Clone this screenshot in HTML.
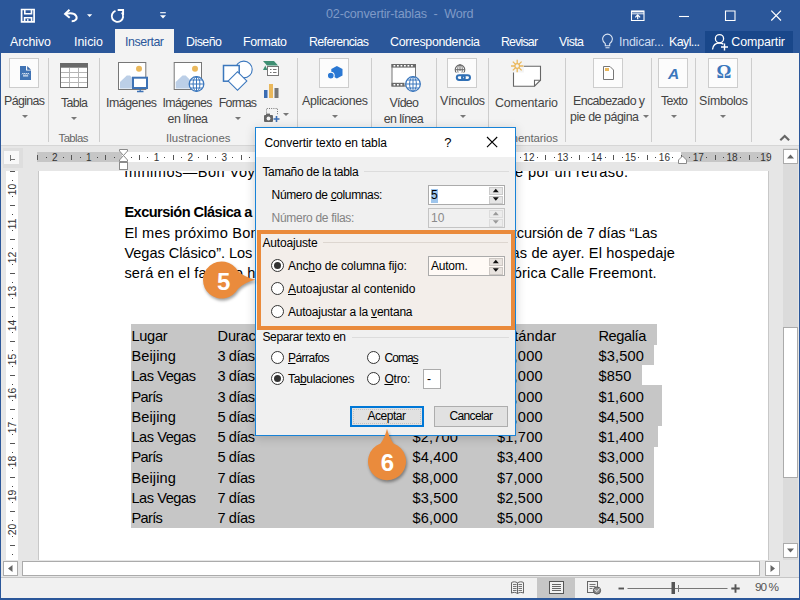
<!DOCTYPE html>
<html lang="es">
<head>
<meta charset="utf-8">
<title>02-convertir-tablas - Word</title>
<style>
*{box-sizing:border-box;margin:0;padding:0}
html,body{width:800px;height:600px;overflow:hidden;background:#e6e6e6;font-family:"Liberation Sans",sans-serif}
.a{position:absolute}
.t{position:absolute;white-space:pre;line-height:1;color:#444}
svg{position:absolute;overflow:visible}
u{text-decoration:underline;text-underline-offset:1px}
#titlebar{left:0;top:0;width:800px;height:53px;background:#2b579a}
#ribbon{left:1px;top:53px;width:798px;height:93px;background:#f3f3f3;border-bottom:1px solid #d6d6d6}
.sep{position:absolute;top:58px;width:1px;height:84px;background:#cdcdcd}
.ibox{position:absolute;top:58px;width:30px;height:30px;background:#fcfcfc;border:1px solid #cdcdcd}
.dd{position:absolute;width:0;height:0;border-left:3px solid transparent;border-right:3px solid transparent;border-top:3px solid #777}
#frameL{left:0;top:0;width:1px;height:600px;background:#2b579a}
#frameR{left:799px;top:0;width:1px;height:600px;background:#2b579a}
#frameB{left:0;top:598px;width:800px;height:2px;background:#2b579a}
#page{left:38px;top:171px;width:731px;height:389px;background:#fff;border-left:1px solid #c8c8c8;border-right:1px solid #c8c8c8;overflow:hidden}
.doc{color:#000}
.sel{position:absolute;background:#c6c6c6}
.sbox{position:absolute;background:#fff;border:1px solid #ababab}
#status{left:1px;top:577px;width:798px;height:21px;background:#f1f1f1;border-top:1px solid #c6c6c6}
#dlg{left:255px;top:127px;width:261px;height:309px;background:#f0f0f0;border:1px solid #1883d7;box-shadow:0 2px 10px rgba(0,0,0,.18)}
#dlgtitle{left:0;top:0;width:259px;height:29px;background:#fff}
.dt{color:#000}
.radio{position:absolute;width:13px;height:13px;border:1px solid #333;border-radius:50%;background:#fff}
.radio.on::after{content:"";position:absolute;left:2px;top:2px;width:7px;height:7px;border-radius:50%;background:#333}
.gline{position:absolute;height:1px;background:#dcdcdc}
.btn{position:absolute;background:#e1e1e1;border:1px solid #adadad}
</style>
</head>
<body>
<!-- ===== window frame / title bar ===== -->
<div id="titlebar" class="a"></div>
<div class="a" style="left:115px;top:29px;width:59px;height:25px;background:#f3f3f3"></div>
<div class="a" style="left:705px;top:31px;width:88px;height:22px;background:#19478a"></div>
<!-- quick access toolbar icons -->
<svg class="a" style="left:0;top:0" width="800" height="53" viewBox="0 0 800 53" fill="none" stroke="#fff" stroke-width="1.4">
 <!-- save -->
 <path d="M21.600 9.500h12.500v12.300H21.600z" stroke-width="1.700"/><path d="M24.800 9.500v4.300h6.700v-4.300" stroke-width="1.600"/><path d="M24.600 21.800v-4h7v4" stroke-width="1.600"/><path d="M27.800 19v2.800" stroke-width="1.300"/>
 <!-- undo -->
 <path d="M65.500 14c3.500-.9 8.500-1.300 10.500 1.700 1.800 3-.6 5.600-4.300 5.600" stroke-width="2"/><path d="M69.500 9.800l-4.400 4.200 4.600 3.800" stroke-width="2"/>
 <path d="M87 14.200h5.200l-2.600 2.800z" fill="#fff" stroke="none"/>
 <!-- redo / repeat -->
 <path d="M115.500 10.800a5.700 5.700 0 1 0 6.300 1.700" stroke-width="1.900"/><path d="M117.700 10h5.400v5" stroke-width="1.900"/>
 <!-- customize QAT -->
 <path d="M160.200 12.700h5.600" stroke-width="1.100"/><path d="M160 15.300h6l-3 3.200z" fill="#fff" stroke="none"/>
 <!-- ribbon display options -->
 <path d="M631.500 11h12.500v9.500h-12.500z" stroke-width="1.100"/><path d="M631.500 11.600h12.500" stroke-width="1.600"/><path d="M631.500 13.800h12.500" stroke-width=".9"/><path d="M637.700 19.300v-4.300M635.300 17.300l2.400-2.500 2.400 2.500" stroke-width="1.200"/>
 <!-- min / max / close -->
 <path d="M679 16.500h10" stroke-width="1.100"/>
 <path d="M725.500 11h9.500v9.500h-9.500z" stroke-width="1.100"/>
 <path d="M771.300 10.700l9.700 9.800M781 10.700l-9.700 9.800" stroke-width="1.200"/>
 <!-- lightbulb -->
 <path d="M605.300 43.700c-1.800-1.500-2.700-2.900-2.700-4.700a4.900 4.900 0 0 1 9.800 0c0 1.800-.9 3.200-2.700 4.700v2.100h-4.400z M605.500 47.800h4" stroke="#dbe5f3" stroke-width="1.100"/>
 <!-- share person -->
 <circle cx="719.500" cy="38.700" r="4.100" stroke-width="1.300"/><path d="M712.500 49.500c.5-4 3-6.500 7-6.500 1.500 0 2.800.4 3.800 1.100" stroke-width="1.300"/><path d="M724.500 43.500v7M721 47h7" stroke-width="1.400"/>
</svg>
<span class="t" style="left:326.00px;top:8.00px;font-size:12.6px;letter-spacing:-0.179px;color:#7f9ac7">02-convertir-tablas  -  Word</span>
<!-- tabs -->
<span class="t" style="left:10.00px;top:36.00px;font-size:12.4px;letter-spacing:-0.055px;color:#fff">Archivo</span>
<span class="t" style="left:74.00px;top:36.00px;font-size:12.4px;letter-spacing:0.013px;color:#fff">Inicio</span>
<span class="t" style="left:125.00px;top:36.00px;font-size:12.4px;letter-spacing:-0.431px;color:#2b579a">Insertar</span>
<span class="t" style="left:186.00px;top:36.00px;font-size:12.4px;letter-spacing:-0.516px;color:#fff">Diseño</span>
<span class="t" style="left:243.00px;top:36.00px;font-size:12.4px;letter-spacing:-0.357px;color:#fff">Formato</span>
<span class="t" style="left:309.00px;top:36.00px;font-size:12.4px;letter-spacing:-0.613px;color:#fff">Referencias</span>
<span class="t" style="left:390.00px;top:36.00px;font-size:12.4px;letter-spacing:-0.312px;color:#fff">Correspondencia</span>
<span class="t" style="left:501.00px;top:36.00px;font-size:12.4px;letter-spacing:-0.833px;color:#fff">Revisar</span>
<span class="t" style="left:559.00px;top:36.00px;font-size:12.4px;letter-spacing:-0.582px;color:#fff">Vista</span>
<span class="t" style="left:619.00px;top:36.00px;font-size:12.4px;letter-spacing:-0.205px;color:#cfdcf0">Indicar...</span>
<span class="t" style="left:669.00px;top:36.00px;font-size:12.4px;letter-spacing:-0.573px;color:#fff">Kayl...</span>
<span class="t" style="left:731.30px;top:36.00px;font-size:12.4px;letter-spacing:-0.086px;color:#fff">Compartir</span>

<!-- ===== ribbon ===== -->
<div id="ribbon" class="a"></div>
<!-- separators -->
<div class="sep" style="left:48px"></div><div class="sep" style="left:99px"></div><div class="sep" style="left:297px"></div>
<div class="sep" style="left:371px"></div><div class="sep" style="left:436px"></div><div class="sep" style="left:488px"></div>
<div class="sep" style="left:565px"></div><div class="sep" style="left:651px"></div><div class="sep" style="left:695px"></div><div class="sep" style="left:751px"></div>
<!-- collapsed group icon boxes -->
<div class="ibox" style="left:9px"></div><div class="ibox" style="left:319px"></div><div class="ibox" style="left:447px"></div>
<div class="ibox" style="left:593px"></div><div class="ibox" style="left:658px"></div><div class="ibox" style="left:708px"></div>
<!-- ribbon icons -->
<svg class="a" style="left:0;top:53px" width="800" height="93" viewBox="0 53 800 93" fill="none">
 <!-- Paginas: blue page -->
 <path d="M20 66h6v4.600h5v9.400h-11z" fill="#4073b4"/><path d="M27.200 66l3.800 3.700h-3.800z" fill="#3a69a8"/><path d="M22 74.300l.9-1 .9 1 .9-1 .9 1 .9-1 .9 1 .9-1 .8 1" stroke="#fff" stroke-width=".9" fill="none"/><path d="M23 75.900h5.200" stroke="#fff" stroke-width="1"/>
 <!-- Tabla -->
 <rect x="60.500" y="63.500" width="27" height="24" fill="#fff" stroke="#6e6e6e" stroke-width="1"/><rect x="60" y="63" width="28" height="4.700" fill="#6a6a6a"/>
 <path d="M61 72.500h26M61 77.500h26M61 82.500h26M69.500 68v19M78.500 68v19" stroke="#b5b5b5" stroke-width="1"/>
 <!-- Imagenes -->
 <rect x="118.500" y="62.500" width="27.300" height="27" fill="#fff" stroke="#777"/><circle cx="139" cy="68.800" r="3" fill="#eab85c"/><path d="M120 88.500v-6.500l6.800-6.500h3.200l8 8v5z" fill="#bccfe7"/>
 <rect x="133" y="77.700" width="14" height="10.300" fill="#fff" stroke="#3d72b5" stroke-width="2"/><path d="M137 91.500h6.500M140.200 89v2.500" stroke="#3d72b5" stroke-width="1.300"/>
 <!-- Imagenes en linea -->
 <rect x="174.200" y="62.500" width="27.300" height="27" fill="#fff" stroke="#777"/><circle cx="195" cy="68.800" r="3" fill="#eab85c"/><path d="M175.700 88.500v-6.500l6.800-6.500h3.200l8 8v5z" fill="#bccfe7"/>
 <circle cx="196.500" cy="84" r="7.300" fill="#fff" stroke="#3b77bd" stroke-width="1.300"/><path d="M189.200 84h14.600M196.500 76.700v14.600M190.500 80h12M190.500 88h12" stroke="#3b77bd" stroke-width="1"/><ellipse cx="196.500" cy="84" rx="3.400" ry="7.300" stroke="#3b77bd" stroke-width="1"/>
 <!-- Formas -->
 <circle cx="243.800" cy="69.500" r="8.400" fill="#fff" stroke="#3b77bd" stroke-width="1.100"/><rect x="223.500" y="65.500" width="15.700" height="15.700" fill="#fff" stroke="#3b77bd" stroke-width="1.500"/><rect x="230.900" y="74.400" width="13.200" height="13.200" fill="#fff" stroke="#3b77bd" stroke-width="1.100" transform="rotate(45 237.500 81)"/>
 <!-- SmartArt -->
 <path d="M263 61h11l4 4.500h-11z" fill="#3f8f73"/><path d="M263 70h4.500l-2.200-4.500z" fill="#3f8f73"/><rect x="267.500" y="66.500" width="11" height="9" fill="#fff" stroke="#777"/><path d="M270 69.500h1.500M273 69.500h3.500M270 72.500h1.500M273 72.500h3.500" stroke="#777"/>
 <!-- Chart -->
 <rect x="264" y="90" width="3.500" height="8" fill="#3b6db3"/><rect x="269" y="84" width="4" height="14" fill="#eab85c"/><rect x="274.500" y="88" width="4" height="10" fill="#777"/>
 <!-- Screenshot -->
 <path d="M266.500 117v-8.500h11v6" stroke="#777" stroke-dasharray="1 1.200"/><rect x="264" y="115" width="9" height="7" rx="1" fill="#666"/><rect x="266" y="113.600" width="4" height="2" fill="#666"/><circle cx="268.500" cy="118.500" r="1.900" fill="#f3f3f3"/><path d="M276.500 116v6M273.500 119h6" stroke="#3b6db3" stroke-width="1.600"/>
 <!-- Aplicaciones -->
 <path d="M331.300 69l5.600-2.900 5.600 2.900v6.600l-5.600 3-5.600-3z" fill="#2a78d3"/><circle cx="330.800" cy="75.600" r="3.400" fill="#2a78d3" stroke="#fdfdfd" stroke-width="1.100"/>
 <!-- Video en linea -->
 <rect x="392" y="64.500" width="23.500" height="21.500" fill="#fff" stroke="#777"/><rect x="391.500" y="64" width="24.500" height="3.600" fill="#6a6a6a"/><rect x="391.500" y="82.800" width="13" height="3.700" fill="#6a6a6a"/>
 <path d="M393.500 65.800h21M393.500 84.700h10" stroke="#fff" stroke-width="1.500" stroke-dasharray="1.800 1.700"/>
 <circle cx="413" cy="84" r="7.300" fill="#fff" stroke="#3b77bd" stroke-width="1.300"/><path d="M405.700 84h14.600M413 76.700v14.600M407 80h12M407 88h12" stroke="#3b77bd" stroke-width="1"/><ellipse cx="413" cy="84" rx="3.400" ry="7.300" stroke="#3b77bd" stroke-width="1"/>
 <!-- Vinculos -->
 <circle cx="460" cy="69.700" r="4.800" stroke="#666" stroke-width="1.100"/><path d="M455.200 69.700h9.600M460 64.900v6" stroke="#666" stroke-width="1"/><ellipse cx="460" cy="69.700" rx="2.300" ry="4.800" stroke="#666" stroke-width=".9"/>
 <rect x="454" y="72.600" width="18" height="9.500" fill="#fcfcfc" stroke="none"/>
 <rect x="456.800" y="75.200" width="8" height="4.800" rx="2.400" stroke="#2f6fb5" stroke-width="2"/><rect x="462" y="75.200" width="8" height="4.800" rx="2.400" stroke="#2f6fb5" stroke-width="2"/>
 <!-- Comentario -->
 <path d="M513.500 66.200h27v14l-6 6h-21z" fill="#fff" stroke="#666" stroke-width="1.100"/><path d="M534.500 86.200v-6h6" stroke="#666" stroke-width="1.100"/>
 <rect x="510.500" y="59.500" width="13.300" height="13" fill="#f3f3f3"/><path d="M517.200 59.800v12.400M511 66h12.400M512.800 61.600l8.800 8.800M521.600 61.600l-8.800 8.800" stroke="#eab85c" stroke-width="1.300"/><circle cx="517.200" cy="66" r="2.300" fill="#f3f3f3" stroke="#eab85c" stroke-width="1.200"/>
 <!-- Encabezado -->
 <path d="M603.500 66.500h6.500l3.500 3.500v9.500h-10z" fill="#fff" stroke="#777"/><rect x="605" y="68" width="4" height="3" fill="#eab85c"/>
 <!-- Simbolos etc handled as text -->
 <!-- collapse caret -->
 <path d="M780.300 140.300l4.400-4.400 4.400 4.400" stroke="#666" stroke-width="2.100"/>
</svg>
<span class="t" style="left:667.90px;top:66.00px;font-size:15.5px;color:#3b77bd;font-style:italic;font-weight:bold">A</span>
<span class="t" style="left:716.59px;top:63.00px;font-size:18.5px;color:#3b77bd;font-family:'Liberation Serif',serif;font-weight:bold">Ω</span>
<!-- ribbon labels -->
<span class="t" style="left:4.00px;top:95.00px;font-size:12.4px;letter-spacing:-0.630px">Páginas</span>
<span class="t" style="left:61.00px;top:97.00px;font-size:12.4px;letter-spacing:-0.656px">Tabla</span>
<span class="t" style="left:106.00px;top:97.00px;font-size:12.4px;letter-spacing:-0.489px">Imágenes</span>
<span class="t" style="left:162.50px;top:97.00px;font-size:12.4px;letter-spacing:-0.632px">Imágenes</span>
<span class="t" style="left:167.50px;top:113.00px;font-size:12.4px;letter-spacing:-0.513px">en línea</span>
<span class="t" style="left:218.70px;top:97.00px;font-size:12.4px;letter-spacing:-0.740px">Formas</span>
<span class="t" style="left:302.00px;top:95.00px;font-size:12.4px;letter-spacing:-0.325px">Aplicaciones</span>
<span class="t" style="left:389.50px;top:97.00px;font-size:12.4px;letter-spacing:-0.773px">Vídeo</span>
<span class="t" style="left:383.70px;top:113.00px;font-size:12.4px;letter-spacing:-0.585px">en línea</span>
<span class="t" style="left:440.00px;top:95.00px;font-size:12.4px;letter-spacing:-0.362px">Vínculos</span>
<span class="t" style="left:495.00px;top:97.00px;font-size:12.4px;letter-spacing:-0.116px">Comentario</span>
<span class="t" style="left:573.00px;top:95.00px;font-size:12.4px;letter-spacing:-0.594px">Encabezado y</span>
<span class="t" style="left:570.00px;top:111.00px;font-size:12.4px;letter-spacing:-0.452px">pie de página</span>
<span class="t" style="left:661.00px;top:95.00px;font-size:12.4px;letter-spacing:-0.656px">Texto</span>
<span class="t" style="left:699.00px;top:95.00px;font-size:12.4px;letter-spacing:-0.379px">Símbolos</span>
<!-- group labels -->
<span class="t" style="left:58.60px;top:133.00px;font-size:11.4px;letter-spacing:-0.627px;color:#666">Tablas</span>
<span class="t" style="left:166.00px;top:133.00px;font-size:11.4px;letter-spacing:0.046px;color:#666">Ilustraciones</span>
<span class="t" style="left:494.00px;top:133.00px;font-size:11.4px;letter-spacing:-0.058px;color:#666">Comentarios</span>
<!-- dropdown arrows -->
<div class="dd" style="left:22px;top:115px"></div><div class="dd" style="left:71px;top:117px"></div><div class="dd" style="left:235px;top:117px"></div>
<div class="dd" style="left:283px;top:113px"></div><div class="dd" style="left:332px;top:115px"></div><div class="dd" style="left:460px;top:115px"></div>
<div class="dd" style="left:643px;top:115px"></div><div class="dd" style="left:671px;top:115px"></div><div class="dd" style="left:720px;top:115px"></div>

<!-- ===== ruler + document ===== -->
<!-- tab selector -->
<div class="a" style="left:3px;top:148px;width:20px;height:20px;background:#dedede"></div>
<div class="a" style="left:4px;top:151px;width:15px;height:13px;background:#f8f8f8"></div>
<div class="a" style="left:9.500px;top:154.500px;width:1.300px;height:6px;background:#777"></div><div class="a" style="left:9.500px;top:159.200px;width:5.500px;height:1.300px;background:#777"></div>
<!-- horizontal ruler -->
<div class="a" style="left:37px;top:152px;width:732px;height:10px;background:#c6c6c6"></div>
<div class="a" style="left:122px;top:152px;width:559px;height:10px;background:#fff"></div>
<svg class="a" style="left:0;top:0" width="800" height="172" viewBox="0 0 800 172"><rect x="37" y="155" width="1" height="5" fill="#555"/><rect x="46" y="157" width="1" height="1" fill="#444"/><rect x="63" y="157" width="1" height="1" fill="#444"/><rect x="71" y="155" width="1" height="5" fill="#555"/><rect x="80" y="157" width="1" height="1" fill="#444"/><rect x="97" y="157" width="1" height="1" fill="#444"/><rect x="105" y="155" width="1" height="5" fill="#555"/><rect x="114" y="157" width="1" height="1" fill="#444"/><rect x="131" y="157" width="1" height="1" fill="#444"/><rect x="139" y="155" width="1" height="5" fill="#555"/><rect x="147" y="157" width="1" height="1" fill="#444"/><rect x="164" y="157" width="1" height="1" fill="#444"/><rect x="173" y="155" width="1" height="5" fill="#555"/><rect x="181" y="157" width="1" height="1" fill="#444"/><rect x="198" y="157" width="1" height="1" fill="#444"/><rect x="207" y="155" width="1" height="5" fill="#555"/><rect x="215" y="157" width="1" height="1" fill="#444"/><rect x="232" y="157" width="1" height="1" fill="#444"/><rect x="241" y="155" width="1" height="5" fill="#555"/><rect x="249" y="157" width="1" height="1" fill="#444"/><rect x="266" y="157" width="1" height="1" fill="#444"/><rect x="274" y="155" width="1" height="5" fill="#555"/><rect x="283" y="157" width="1" height="1" fill="#444"/><rect x="300" y="157" width="1" height="1" fill="#444"/><rect x="308" y="155" width="1" height="5" fill="#555"/><rect x="317" y="157" width="1" height="1" fill="#444"/><rect x="334" y="157" width="1" height="1" fill="#444"/><rect x="342" y="155" width="1" height="5" fill="#555"/><rect x="351" y="157" width="1" height="1" fill="#444"/><rect x="368" y="157" width="1" height="1" fill="#444"/><rect x="376" y="155" width="1" height="5" fill="#555"/><rect x="385" y="157" width="1" height="1" fill="#444"/><rect x="401" y="157" width="1" height="1" fill="#444"/><rect x="410" y="155" width="1" height="5" fill="#555"/><rect x="418" y="157" width="1" height="1" fill="#444"/><rect x="435" y="157" width="1" height="1" fill="#444"/><rect x="444" y="155" width="1" height="5" fill="#555"/><rect x="452" y="157" width="1" height="1" fill="#444"/><rect x="469" y="157" width="1" height="1" fill="#444"/><rect x="478" y="155" width="1" height="5" fill="#555"/><rect x="486" y="157" width="1" height="1" fill="#444"/><rect x="503" y="157" width="1" height="1" fill="#444"/><rect x="511" y="155" width="1" height="5" fill="#555"/><rect x="520" y="157" width="1" height="1" fill="#444"/><rect x="537" y="157" width="1" height="1" fill="#444"/><rect x="545" y="155" width="1" height="5" fill="#555"/><rect x="554" y="157" width="1" height="1" fill="#444"/><rect x="571" y="157" width="1" height="1" fill="#444"/><rect x="579" y="155" width="1" height="5" fill="#555"/><rect x="588" y="157" width="1" height="1" fill="#444"/><rect x="605" y="157" width="1" height="1" fill="#444"/><rect x="613" y="155" width="1" height="5" fill="#555"/><rect x="622" y="157" width="1" height="1" fill="#444"/><rect x="638" y="157" width="1" height="1" fill="#444"/><rect x="647" y="155" width="1" height="5" fill="#555"/><rect x="655" y="157" width="1" height="1" fill="#444"/><rect x="672" y="157" width="1" height="1" fill="#444"/><rect x="681" y="155" width="1" height="5" fill="#555"/><rect x="689" y="157" width="1" height="1" fill="#444"/><rect x="706" y="157" width="1" height="1" fill="#444"/><rect x="715" y="155" width="1" height="5" fill="#555"/><rect x="723" y="157" width="1" height="1" fill="#444"/><rect x="740" y="157" width="1" height="1" fill="#444"/><rect x="749" y="155" width="1" height="5" fill="#555"/><rect x="757" y="157" width="1" height="1" fill="#444"/><!-- indent markers --><path d="M119.500 149.500h8v1.500l-4 4.500-4-4.500z M119.500 161.500v-1.500l4-4.500 4 4.500v1.500z" fill="#fff" stroke="#8a8a8a"/><rect x="119.500" y="162.500" width="8" height="7" fill="#fff" stroke="#8a8a8a"/><path d="M678.500 163.500v-3.500l4-4 4 4v3.500z" fill="#fff" stroke="#8a8a8a"/></svg>
<span class="t" style="left:52.12px;top:153.00px;font-size:10px;color:#333">2</span>
<span class="t" style="left:85.92px;top:153.00px;font-size:10px;color:#333">1</span>
<span class="t" style="left:153.72px;top:153.00px;font-size:10px;color:#333">1</span>
<span class="t" style="left:187.52px;top:153.00px;font-size:10px;color:#333">2</span>
<span class="t" style="left:221.42px;top:153.00px;font-size:10px;color:#333">3</span>
<span class="t" style="left:255.22px;top:153.00px;font-size:10px;color:#333">4</span>
<span class="t" style="left:289.12px;top:153.00px;font-size:10px;color:#333">5</span>
<span class="t" style="left:323.02px;top:153.00px;font-size:10px;color:#333">6</span>
<span class="t" style="left:356.82px;top:153.00px;font-size:10px;color:#333">7</span>
<span class="t" style="left:390.72px;top:153.00px;font-size:10px;color:#333">8</span>
<span class="t" style="left:424.52px;top:153.00px;font-size:10px;color:#333">9</span>
<span class="t" style="left:455.64px;top:153.00px;font-size:10px;color:#333">10</span>
<span class="t" style="left:489.90px;top:153.00px;font-size:10px;color:#333">11</span>
<span class="t" style="left:523.34px;top:153.00px;font-size:10px;color:#333">12</span>
<span class="t" style="left:557.24px;top:153.00px;font-size:10px;color:#333">13</span>
<span class="t" style="left:591.04px;top:153.00px;font-size:10px;color:#333">14</span>
<span class="t" style="left:624.94px;top:153.00px;font-size:10px;color:#333">15</span>
<span class="t" style="left:658.84px;top:153.00px;font-size:10px;color:#333">16</span>
<span class="t" style="left:692.64px;top:153.00px;font-size:10px;color:#333">17</span>
<span class="t" style="left:726.54px;top:153.00px;font-size:10px;color:#333">18</span>
<span class="t" style="left:760.34px;top:153.00px;font-size:10px;color:#333">19</span>
<!-- vertical ruler -->
<div class="a" style="left:6px;top:171px;width:12px;height:389px;background:#fff;overflow:hidden" id="vr"></div>
<svg class="a" style="left:0;top:0" width="40" height="600" viewBox="0 0 40 600"><rect x="10" y="171" width="5" height="1" fill="#555"/><rect x="12" y="180" width="1" height="1" fill="#444"/><rect x="12" y="196" width="1" height="1" fill="#444"/><rect x="10" y="205" width="5" height="1" fill="#555"/><rect x="12" y="214" width="1" height="1" fill="#444"/><rect x="12" y="230" width="1" height="1" fill="#444"/><rect x="10" y="239" width="5" height="1" fill="#555"/><rect x="12" y="248" width="1" height="1" fill="#444"/><rect x="12" y="264" width="1" height="1" fill="#444"/><rect x="10" y="273" width="5" height="1" fill="#555"/><rect x="12" y="282" width="1" height="1" fill="#444"/><rect x="12" y="298" width="1" height="1" fill="#444"/><rect x="10" y="307" width="5" height="1" fill="#555"/><rect x="12" y="316" width="1" height="1" fill="#444"/><rect x="12" y="332" width="1" height="1" fill="#444"/><rect x="10" y="341" width="5" height="1" fill="#555"/><rect x="12" y="350" width="1" height="1" fill="#444"/><rect x="12" y="366" width="1" height="1" fill="#444"/><rect x="10" y="375" width="5" height="1" fill="#555"/><rect x="12" y="384" width="1" height="1" fill="#444"/><rect x="12" y="400" width="1" height="1" fill="#444"/><rect x="10" y="409" width="5" height="1" fill="#555"/><rect x="12" y="418" width="1" height="1" fill="#444"/><rect x="12" y="434" width="1" height="1" fill="#444"/><rect x="10" y="443" width="5" height="1" fill="#555"/><rect x="12" y="452" width="1" height="1" fill="#444"/><rect x="12" y="468" width="1" height="1" fill="#444"/><rect x="10" y="477" width="5" height="1" fill="#555"/><rect x="12" y="486" width="1" height="1" fill="#444"/><rect x="12" y="502" width="1" height="1" fill="#444"/><rect x="10" y="511" width="5" height="1" fill="#555"/><rect x="12" y="520" width="1" height="1" fill="#444"/><rect x="12" y="536" width="1" height="1" fill="#444"/><rect x="10" y="545" width="5" height="1" fill="#555"/><rect x="12" y="554" width="1" height="1" fill="#444"/></svg>
<span class="t" style="left:0.00px;top:-9.00px;font-size:10.4px;color:#333;left:0;top:0;transform-origin:0 0;transform:translate(8px,195.3px) rotate(-90deg)">10</span>
<span class="t" style="left:0.00px;top:-9.00px;font-size:10.4px;color:#333;left:0;top:0;transform-origin:0 0;transform:translate(8px,229.3px) rotate(-90deg)">11</span>
<span class="t" style="left:0.00px;top:-9.00px;font-size:10.4px;color:#333;left:0;top:0;transform-origin:0 0;transform:translate(8px,263.3px) rotate(-90deg)">12</span>
<span class="t" style="left:0.00px;top:-9.00px;font-size:10.4px;color:#333;left:0;top:0;transform-origin:0 0;transform:translate(8px,297.3px) rotate(-90deg)">13</span>
<span class="t" style="left:0.00px;top:-9.00px;font-size:10.4px;color:#333;left:0;top:0;transform-origin:0 0;transform:translate(8px,331.3px) rotate(-90deg)">14</span>
<span class="t" style="left:0.00px;top:-9.00px;font-size:10.4px;color:#333;left:0;top:0;transform-origin:0 0;transform:translate(8px,365.3px) rotate(-90deg)">15</span>
<span class="t" style="left:0.00px;top:-9.00px;font-size:10.4px;color:#333;left:0;top:0;transform-origin:0 0;transform:translate(8px,399.3px) rotate(-90deg)">16</span>
<span class="t" style="left:0.00px;top:-9.00px;font-size:10.4px;color:#333;left:0;top:0;transform-origin:0 0;transform:translate(8px,433.3px) rotate(-90deg)">17</span>
<span class="t" style="left:0.00px;top:-9.00px;font-size:10.4px;color:#333;left:0;top:0;transform-origin:0 0;transform:translate(8px,467.3px) rotate(-90deg)">18</span>
<span class="t" style="left:0.00px;top:-9.00px;font-size:10.4px;color:#333;left:0;top:0;transform-origin:0 0;transform:translate(8px,501.3px) rotate(-90deg)">19</span>
<span class="t" style="left:0.00px;top:-9.00px;font-size:10.4px;color:#333;left:0;top:0;transform-origin:0 0;transform:translate(8px,535.3px) rotate(-90deg)">20</span>
<!-- page -->
<div id="page" class="a"></div>
<!-- selection highlight -->
<div class="sel" style="left:131px;top:324px;width:526px;height:21px"></div>
<div class="sel" style="left:131px;top:344.600px;width:522.600px;height:20px"></div>
<div class="sel" style="left:131px;top:364.400px;width:510.600px;height:21px"></div>
<div class="sel" style="left:131px;top:385px;width:531px;height:41px"></div>
<div class="sel" style="left:131px;top:425.600px;width:527px;height:21px"></div>
<div class="sel" style="left:131px;top:446.600px;width:523px;height:81px"></div>
<!-- body text -->
<div class="a" style="left:39px;top:171px;width:729px;height:389px;overflow:hidden">
<div class="a" style="left:-39px;top:-171px;width:800px;height:600px">
<span class="t" style="left:124.40px;top:165.00px;font-size:14.6px;letter-spacing:0.456px;color:#000">mínimos—Bon Voyage</span>
<span class="t" style="left:358.69px;top:165.00px;font-size:14.6px;letter-spacing:0.363px;color:#000">Excursiones se disculpe por un retraso.</span>
<span class="t" style="left:124.40px;top:205.00px;font-size:14.6px;letter-spacing:-0.550px;color:#000;font-weight:bold">Excursión Clásica a</span>
<span class="t" style="left:257.00px;top:205.00px;font-size:14.6px;color:#000;font-weight:bold">Las Vegas</span>
<span class="t" style="left:124.40px;top:226.00px;font-size:14.6px;letter-spacing:0.221px;color:#000">El mes próximo Bon Voyage</span>
<span class="t" style="left:345.40px;top:226.00px;font-size:14.6px;letter-spacing:-0.145px;color:#000">Excursiones presenta la excursión de 7 días “Las</span>
<span class="t" style="left:124.40px;top:246.00px;font-size:14.6px;letter-spacing:-0.055px;color:#000">Vegas Clásico”. Los huéspedes</span>
<span class="t" style="left:302.82px;top:246.00px;font-size:14.6px;letter-spacing:0.161px;color:#000">revivirán el encanto de Las Vegas de ayer. El hospedaje</span>
<span class="t" style="left:124.40px;top:266.00px;font-size:14.6px;letter-spacing:0.156px;color:#000">será en el famoso hotel</span>
<span class="t" style="left:344.87px;top:266.00px;font-size:14.6px;letter-spacing:0.169px;color:#000">Golden Nugget, en la histórica Calle Freemont.</span>
<span class="t" style="left:131.40px;top:329.00px;font-size:14.6px;letter-spacing:-0.282px;color:#000">Lugar</span>
<span class="t" style="left:217.60px;top:329.00px;font-size:14.6px;letter-spacing:-0.201px;color:#000">Duración</span>
<span class="t" style="left:412.40px;top:329.00px;font-size:14.6px;letter-spacing:-0.102px;color:#000">Primera clase</span>
<span class="t" style="left:497.00px;top:329.00px;font-size:14.6px;letter-spacing:0.083px;color:#000">Estándar</span>
<span class="t" style="left:598.40px;top:329.00px;font-size:14.6px;letter-spacing:-0.385px;color:#000">Regalía</span>
<span class="t" style="left:131.40px;top:349.00px;font-size:14.6px;letter-spacing:0.115px;color:#000">Beijing</span>
<span class="t" style="left:217.60px;top:349.00px;font-size:14.6px;letter-spacing:-0.473px;color:#000">3 días</span>
<span class="t" style="left:412.40px;top:349.00px;font-size:14.6px;letter-spacing:0.192px;color:#000">$7,000</span>
<span class="t" style="left:497.00px;top:349.00px;font-size:14.6px;letter-spacing:0.192px;color:#000">$6,000</span>
<span class="t" style="left:598.40px;top:349.00px;font-size:14.6px;letter-spacing:0.192px;color:#000">$3,500</span>
<span class="t" style="left:131.40px;top:369.00px;font-size:14.6px;letter-spacing:-0.446px;color:#000">Las Vegas</span>
<span class="t" style="left:217.60px;top:369.00px;font-size:14.6px;letter-spacing:-0.473px;color:#000">3 días</span>
<span class="t" style="left:412.40px;top:369.00px;font-size:14.6px;letter-spacing:0.192px;color:#000">$2,000</span>
<span class="t" style="left:497.00px;top:369.00px;font-size:14.6px;letter-spacing:0.192px;color:#000">$1,000</span>
<span class="t" style="left:598.40px;top:369.00px;font-size:14.6px;letter-spacing:0.177px;color:#000">$850</span>
<span class="t" style="left:131.40px;top:390.00px;font-size:14.6px;letter-spacing:-0.641px;color:#000">París</span>
<span class="t" style="left:217.60px;top:390.00px;font-size:14.6px;letter-spacing:-0.473px;color:#000">3 días</span>
<span class="t" style="left:412.40px;top:390.00px;font-size:14.6px;letter-spacing:0.192px;color:#000">$5,000</span>
<span class="t" style="left:497.00px;top:390.00px;font-size:14.6px;letter-spacing:0.192px;color:#000">$4,000</span>
<span class="t" style="left:598.40px;top:390.00px;font-size:14.6px;letter-spacing:0.192px;color:#000">$1,600</span>
<span class="t" style="left:131.40px;top:410.00px;font-size:14.6px;letter-spacing:0.115px;color:#000">Beijing</span>
<span class="t" style="left:217.60px;top:410.00px;font-size:14.6px;letter-spacing:-0.473px;color:#000">5 días</span>
<span class="t" style="left:412.40px;top:410.00px;font-size:14.6px;letter-spacing:0.192px;color:#000">$8,000</span>
<span class="t" style="left:497.00px;top:410.00px;font-size:14.6px;letter-spacing:0.192px;color:#000">$7,000</span>
<span class="t" style="left:598.40px;top:410.00px;font-size:14.6px;letter-spacing:0.192px;color:#000">$4,500</span>
<span class="t" style="left:131.40px;top:430.00px;font-size:14.6px;letter-spacing:-0.446px;color:#000">Las Vegas</span>
<span class="t" style="left:217.60px;top:430.00px;font-size:14.6px;letter-spacing:-0.473px;color:#000">5 días</span>
<span class="t" style="left:412.40px;top:430.00px;font-size:14.6px;letter-spacing:0.192px;color:#000">$2,700</span>
<span class="t" style="left:497.00px;top:430.00px;font-size:14.6px;letter-spacing:0.192px;color:#000">$1,700</span>
<span class="t" style="left:598.40px;top:430.00px;font-size:14.6px;letter-spacing:0.192px;color:#000">$1,400</span>
<span class="t" style="left:131.40px;top:450.00px;font-size:14.6px;letter-spacing:-0.641px;color:#000">París</span>
<span class="t" style="left:217.60px;top:450.00px;font-size:14.6px;letter-spacing:-0.473px;color:#000">5 días</span>
<span class="t" style="left:412.40px;top:450.00px;font-size:14.6px;letter-spacing:0.192px;color:#000">$4,400</span>
<span class="t" style="left:497.00px;top:450.00px;font-size:14.6px;letter-spacing:0.192px;color:#000">$3,400</span>
<span class="t" style="left:598.40px;top:450.00px;font-size:14.6px;letter-spacing:0.192px;color:#000">$3,000</span>
<span class="t" style="left:131.40px;top:471.00px;font-size:14.6px;letter-spacing:0.115px;color:#000">Beijing</span>
<span class="t" style="left:217.60px;top:471.00px;font-size:14.6px;letter-spacing:-0.473px;color:#000">7 días</span>
<span class="t" style="left:412.40px;top:471.00px;font-size:14.6px;letter-spacing:0.192px;color:#000">$8,000</span>
<span class="t" style="left:497.00px;top:471.00px;font-size:14.6px;letter-spacing:0.192px;color:#000">$7,000</span>
<span class="t" style="left:598.40px;top:471.00px;font-size:14.6px;letter-spacing:0.192px;color:#000">$6,500</span>
<span class="t" style="left:131.40px;top:491.00px;font-size:14.6px;letter-spacing:-0.446px;color:#000">Las Vegas</span>
<span class="t" style="left:217.60px;top:491.00px;font-size:14.6px;letter-spacing:-0.473px;color:#000">7 días</span>
<span class="t" style="left:412.40px;top:491.00px;font-size:14.6px;letter-spacing:0.192px;color:#000">$3,500</span>
<span class="t" style="left:497.00px;top:491.00px;font-size:14.6px;letter-spacing:0.192px;color:#000">$2,500</span>
<span class="t" style="left:598.40px;top:491.00px;font-size:14.6px;letter-spacing:0.192px;color:#000">$2,000</span>
<span class="t" style="left:131.40px;top:511.00px;font-size:14.6px;letter-spacing:-0.641px;color:#000">París</span>
<span class="t" style="left:217.60px;top:511.00px;font-size:14.6px;letter-spacing:-0.473px;color:#000">7 días</span>
<span class="t" style="left:412.40px;top:511.00px;font-size:14.6px;letter-spacing:0.192px;color:#000">$6,000</span>
<span class="t" style="left:497.00px;top:511.00px;font-size:14.6px;letter-spacing:0.192px;color:#000">$5,000</span>
<span class="t" style="left:598.40px;top:511.00px;font-size:14.6px;letter-spacing:0.192px;color:#000">$4,500</span>
</div></div>
<!-- vertical scrollbar -->
<div class="a" style="left:783px;top:148px;width:15px;height:412px;background:#dbdbdb"></div>
<div class="sbox" style="left:783px;top:149px;width:15px;height:15px"></div>
<div class="sbox" style="left:783px;top:327px;width:15px;height:151px"></div>
<div class="sbox" style="left:783px;top:543px;width:15px;height:15px"></div>
<svg class="a" style="left:783px;top:149px" width="15" height="410" viewBox="0 0 15 410"><path d="M4 9.500l3.500-4 3.500 4z M4 399.500l3.500 4 3.500-4z" fill="#666"/></svg>
<!-- horizontal scrollbar -->
<div class="a" style="left:1px;top:560px;width:798px;height:17px;background:#e6e6e6"></div>
<div class="sbox" style="left:3px;top:561px;width:15px;height:15px"></div>
<div class="sbox" style="left:22px;top:561px;width:738px;height:15px"></div>
<div class="sbox" style="left:765px;top:561px;width:15px;height:15px"></div>
<svg class="a" style="left:0;top:561px" width="800" height="15" viewBox="0 0 800 15"><path d="M12.500 4l-4.500 3.500 4.500 3.500z M770.500 4l4.500 3.500-4.500 3.500z" fill="#666"/></svg>

<!-- ===== status bar ===== -->
<div id="status" class="a"></div>

<div class="a" style="left:537px;top:578px;width:38px;height:20px;background:#c6c6c6"></div>
<svg class="a" style="left:0;top:578px" width="800" height="20" viewBox="0 578 800 20" fill="none" stroke="#666">
 <!-- read mode -->
 <path d="M511.500 582.500c2-1 4-1 6 .4v10.600c-2-1.400-4-1.400-6-.4z M523.500 582.500c-2-1-4-1-6 .4v10.600c2-1.400 4-1.400 6-.4z" fill="#f1f1f1"/><path d="M513 584.500h3.500M513 586.500h3.500M513 588.500h3.500M513 590.500h3.500M518.500 584.500h3.500M518.500 586.500h3.500M518.500 588.500h3.500M518.500 590.500h3.500" stroke-width=".9"/>
 <!-- print layout -->
 <rect x="549.500" y="581.500" width="14" height="12" fill="#f1f1f1" stroke="#555"/><path d="M552 584.500h9M552 586.500h9M552 588.500h9M552 590.500h9" stroke="#555" stroke-width=".9"/>
 <!-- web layout -->
 <rect x="587.500" y="581.500" width="10" height="11" fill="#f1f1f1"/><path d="M589.500 584.500h6M589.500 586.500h6M589.500 588.500h3" stroke-width=".9"/><circle cx="597" cy="590.500" r="3.600" fill="#8a8a8a" stroke="#555"/><path d="M594.500 589.500l2.500 2 2.500-3" stroke="#f1f1f1" stroke-width=".9"/>
 <!-- zoom slider -->
 <path d="M618.500 588.500h5.500" stroke="#555" stroke-width="1.900"/><path d="M627.500 588.500h100" stroke="#777" stroke-width="1"/><rect x="671.500" y="582" width="3.500" height="12" fill="#555" stroke="none"/><path d="M678.500 585v7" stroke="#777"/>
 <path d="M731.300 588.500h8.400M735.500 584.300v8.400" stroke="#555" stroke-width="1.900"/>
</svg>
<span class="t" style="left:755.00px;top:582.00px;font-size:11.8px;letter-spacing:-0.964px;color:#555">90 %</span>

<div id="frameL" class="a"></div><div id="frameR" class="a"></div><div id="frameB" class="a"></div>
<!-- ===== dialog ===== -->
<div id="dlg" class="a"><div id="dlgtitle" class="a"></div></div>
<!-- dialog title -->
<span class="t" style="left:264.40px;top:137.00px;font-size:12px;letter-spacing:-0.064px;color:#000">Convertir texto en tabla</span>
<span class="t" style="left:444.20px;top:136.00px;font-size:13px;color:#000">?</span>
<svg class="a" style="left:486px;top:136px" width="12" height="12" viewBox="0 0 12 12"><path d="M1 1l10.200 10.200M11.200 1L1 11.200" stroke="#000" stroke-width="1.100"/></svg>
<!-- group: Tamano de la tabla -->
<span class="t" style="left:262.40px;top:166.00px;font-size:12px;letter-spacing:-0.306px;color:#000">Tamaño de la tabla</span>
<div class="gline" style="left:364px;top:171px;width:145px"></div>
<span class="t" style="left:271.60px;top:189.00px;font-size:12px;letter-spacing:-0.367px;color:#000">Número de <u>c</u>olumnas:</span>
<span class="t" style="left:271.60px;top:212.00px;font-size:12px;letter-spacing:-0.305px;color:#838383">Número de filas:</span>
<div class="sbox" style="left:428px;top:185px;width:77px;height:20px;border-color:#ababab"></div>
<div class="a" style="left:430.500px;top:188.500px;width:7.500px;height:14px;background:#9ec5ec"></div>
<span class="t" style="left:431.00px;top:189.00px;font-size:12px;color:#000">5</span>
<div class="a" style="left:488.500px;top:187px;width:14.500px;height:8px;background:#e5e5e5;border:1px solid #cacaca"></div><div class="a" style="left:488.500px;top:195.5px;width:14.500px;height:8px;background:#e5e5e5;border:1px solid #cacaca"></div><svg class="a" style="left:488px;top:186px" width="16" height="18" viewBox="0 0 16 18"><path d="M4.800 6.300l3-3.500 3 3.500z M4.800 11.200l3 3.500 3-3.500z" fill="#111"/></svg>
<div class="sbox" style="left:428px;top:208px;width:77px;height:20px;background:#f0f0f0;border-color:#c4c4c4"></div>
<span class="t" style="left:431.00px;top:212.00px;font-size:12px;color:#8a8a8a">10</span>
<div class="a" style="left:488.500px;top:210px;width:14.500px;height:8px;background:#ececec;border:1px solid #dcdcdc"></div><div class="a" style="left:488.500px;top:218.5px;width:14.500px;height:8px;background:#ececec;border:1px solid #dcdcdc"></div><svg class="a" style="left:488px;top:209px" width="16" height="18" viewBox="0 0 16 18"><path d="M4.800 6.300l3-3.500 3 3.500z M4.800 11.200l3 3.500 3-3.500z" fill="#9a9a9a"/></svg>
<!-- group: Autoajuste (highlighted) -->
<div class="a" style="left:256.500px;top:230px;width:258.500px;height:99.500px;background:#f3eeea;border:4px solid #ea8a3b"></div>
<span class="t" style="left:262.40px;top:237.00px;font-size:12px;letter-spacing:-0.169px;color:#000">Autoajuste</span>
<div class="gline" style="left:323px;top:242px;width:185px;background:#ddd6d0"></div>
<div class="radio on" style="left:271px;top:259px"></div>
<span class="t" style="left:288.00px;top:260.00px;font-size:12px;letter-spacing:-0.126px;color:#000">Anc<u>h</u>o de columna fijo:</span>
<div class="radio" style="left:271px;top:282px"></div>
<span class="t" style="left:288.00px;top:283.00px;font-size:12px;letter-spacing:-0.059px;color:#000"><u>A</u>utoajustar al contenido</span>
<div class="radio" style="left:271px;top:305px"></div>
<span class="t" style="left:288.00px;top:306.00px;font-size:12px;letter-spacing:-0.214px;color:#000">Autoajustar a la <u>v</u>entana</span>
<div class="sbox" style="left:428px;top:256px;width:77px;height:20px;border-color:#ababab;background:#fffaf6"></div>
<span class="t" style="left:431.00px;top:260.00px;font-size:12px;letter-spacing:-0.243px;color:#000">Autom.</span>
<div class="a" style="left:488.500px;top:258px;width:14.500px;height:8px;background:#e8e3df;border:1px solid #cdc8c4"></div><div class="a" style="left:488.500px;top:266.5px;width:14.500px;height:8px;background:#e8e3df;border:1px solid #cdc8c4"></div><svg class="a" style="left:488px;top:257px" width="16" height="18" viewBox="0 0 16 18"><path d="M4.800 6.300l3-3.500 3 3.500z M4.800 11.200l3 3.500 3-3.500z" fill="#111"/></svg>
<!-- group: Separar texto en -->
<span class="t" style="left:262.40px;top:331.00px;font-size:12px;letter-spacing:-0.342px;color:#000">Separar texto en</span>
<div class="gline" style="left:352px;top:336.500px;width:157px"></div>
<div class="radio" style="left:271px;top:351px"></div>
<span class="t" style="left:288.00px;top:352.00px;font-size:12px;letter-spacing:-0.539px;color:#000"><u>P</u>árrafos</span>
<div class="radio on" style="left:271px;top:372px"></div>
<span class="t" style="left:288.00px;top:373.00px;font-size:12px;letter-spacing:-0.334px;color:#000">Ta<u>b</u>ulaciones</span>
<div class="radio" style="left:367px;top:351px"></div>
<span class="t" style="left:384.40px;top:352.00px;font-size:12px;letter-spacing:-0.904px;color:#000">Coma<u>s</u></span>
<div class="radio" style="left:367px;top:372px"></div>
<span class="t" style="left:384.40px;top:373.00px;font-size:12px;letter-spacing:-0.172px;color:#000"><u>O</u>tro:</span>
<div class="sbox" style="left:423px;top:369px;width:18px;height:20px;border-color:#ababab"></div>
<span class="t" style="left:427.00px;top:373.00px;font-size:12px;color:#000">-</span>
<!-- buttons -->
<div class="btn" style="left:350px;top:405.500px;width:74px;height:21.500px;border:2px solid #0078d7"></div>
<div class="a" style="left:353px;top:408.500px;width:68px;height:15.500px;border:1px dotted #c2c2c2"></div>
<span class="t" style="left:367.50px;top:410.00px;font-size:12px;letter-spacing:-0.477px;color:#000">Aceptar</span>
<div class="btn" style="left:434px;top:405.500px;width:74px;height:21px"></div>
<span class="t" style="left:449.60px;top:410.00px;font-size:12px;letter-spacing:-0.662px;color:#000">Cancelar</span>

<!-- step callouts -->
<svg class="a" style="left:0;top:0;filter:drop-shadow(1.500px 2px 1.800px rgba(0,0,0,.38))" width="800" height="600" viewBox="0 0 800 600">
 <path d="M237.900 271Q244.500 277.300 255.500 279.800Q244.500 282.300 237.900 289A18.600 18.600 0 1 1 237.900 271Z" fill="#ea8b3c"/>
 <path d="M380.500 443.500Q385 437.500 387 428.800Q389 437.500 393.500 443.500A19 19 0 1 1 380.500 443.500Z" fill="#ea8b3c"/>
</svg>
<span class="t" style="left:216.92px;top:270.00px;font-size:24px;color:#fff;font-weight:bold">5</span>
<span class="t" style="left:380.72px;top:451.00px;font-size:24px;color:#fff;font-weight:bold">6</span>
</body>
</html>
